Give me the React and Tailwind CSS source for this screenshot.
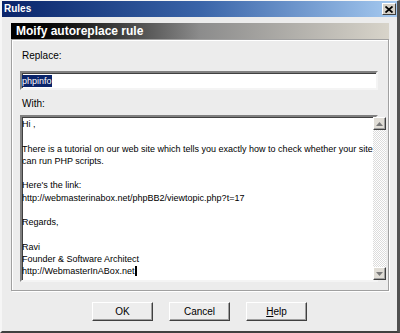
import React from "react";

const font = { fontFamily: '"Liberation Sans", Arial, sans-serif' };

function Btn({ children }) {
  return (
    <div className="w-[61px] h-[19px] flex items-center justify-center bg-[#ededed] border border-t-white border-l-white border-r-[#404040] border-b-[#404040] shadow-[inset_-1px_-1px_0_#a0a0a0] text-[10px] text-black">
      {children}
    </div>
  );
}

function Arrow({ up }) {
  return (
    <div className="w-[13px] h-[13px] flex items-center justify-center bg-[#e0ddd6] border border-t-white border-l-white border-r-[#404040] border-b-[#404040] shadow-[inset_-1px_-1px_0_#a0a0a0]">
      <svg width="7" height="4" viewBox="0 0 7 4">
        {up ? (
          <path d="M3.5 0 L7 4 L0 4 Z" fill="#7a7a7a" />
        ) : (
          <path d="M0 0 L7 0 L3.5 4 Z" fill="#7a7a7a" />
        )}
      </svg>
    </div>
  );
}

export default function App() {
  const lines = [
    "Hi ,",
    "",
    "There is a tutorial on our web site which tells you exactly how to check whether your site",
    "can run PHP scripts.",
    "",
    "Here's the link:",
    "http://webmasterinabox.net/phpBB2/viewtopic.php?t=17",
    "",
    "Regards,",
    "",
    "Ravi",
    "Founder & Software Architect",
  ];
  return (
    <div
      style={font}
      className="w-[400px] h-[333px] flex flex-col bg-[#ececec] border-l-2 border-l-[#f6f6f6] border-t border-t-[#f6f6f6] border-r-[3px] border-r-[#505050] border-b-2 border-b-[#404040] overflow-hidden"
    >
      {/* title bar */}
      <div className="h-[16px] shrink-0 flex items-center justify-between bg-gradient-to-r from-[#0a246a] via-[#3a64a8] to-[#a6caf0]">
        <span className="pl-[2px] text-[10px] font-bold text-white leading-none">Rules</span>
        <div className="mr-[1px] w-[14px] h-[12px] flex items-center justify-center bg-[#d4d0c8] border border-t-white border-l-white border-r-[#404040] border-b-[#404040]">
          <svg width="8" height="7" viewBox="0 0 8 7">
            <path d="M0.5 0.5 L7.5 6.5 M7.5 0.5 L0.5 6.5" stroke="#000" strokeWidth="1.8" />
          </svg>
        </div>
      </div>

      <div className="flex flex-col pt-[6px] pl-[9px] pr-[8px]">
        {/* header */}
        <div className="h-[16px] flex items-center bg-gradient-to-r from-black via-[#8c8c8c] to-[#d8d4ca]">
          <span className="pl-[5px] text-[12px] font-bold text-white leading-none">
            Moify autoreplace rule
          </span>
        </div>

        {/* panel */}
        <div className="h-[252px] border border-[#a0a0a0] shadow-[inset_1px_1px_0_#fff,1px_1px_0_#fff] flex flex-col pl-[8px] pt-[10px]">
          <div className="pl-[2px] text-[10px] leading-[12px] text-black">Replace:</div>
          <div className="mt-[9px] w-[358px] h-[19px] bg-white border-2 border-t-[#808080] border-l-[#808080] border-b-[#f4f4f4] border-r-[#f4f4f4] shadow-[inset_1px_1px_0_#404040] flex items-center pl-[0px]">
            <span className="bg-[#0a246a] text-white text-[9px] leading-[12px] px-[0px]">phpinfo</span>
          </div>
          <div className="mt-[8px] pl-[2px] text-[10px] leading-[12px] text-black">With:</div>
          <div className="mt-[5px] w-[358px] h-[167px] bg-white border-2 border-t-[#808080] border-l-[#808080] border-b-[#f4f4f4] border-r-[#f4f4f4] shadow-[inset_1px_1px_0_#404040] flex">
            <div className="flex-1 pt-[1px] text-[9px] leading-[12.25px] text-black whitespace-pre">
              {lines.map((l, i) => (
                <div key={i} className="h-[12.25px]">{l}</div>
              ))}
              <div className="h-[12.25px] flex items-center">
                http://WebmasterInABox.net
                <span className="inline-block w-[1.5px] h-[10px] bg-black ml-[1px]" />
              </div>
            </div>
            <div className="w-[13px] flex flex-col bg-[repeating-conic-gradient(#ffffff_0_25%,#dcdcdc_0_50%)] bg-[length:2px_2px]">
              <Arrow up />
              <div className="flex-1" />
              <Arrow />
            </div>
          </div>
        </div>
      </div>

      {/* buttons */}
      <div className="mt-[11px] flex justify-center gap-[16px]">
        <Btn>OK</Btn>
        <Btn>Cancel</Btn>
        <Btn>
          <span className="underline">H</span>elp
        </Btn>
      </div>
    </div>
  );
}
